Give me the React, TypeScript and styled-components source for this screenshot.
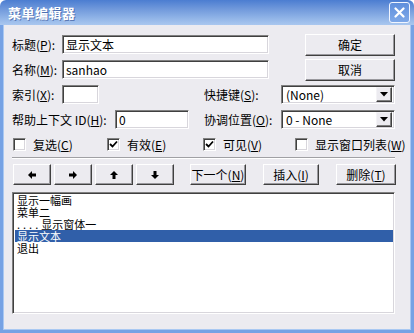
import * as React from 'react';
import styled, { createGlobalStyle } from 'styled-components';

const GlobalStyle = createGlobalStyle`
  html, body {
    margin: 0;
    padding: 0;
    overflow: hidden;
    background: #ffffff;
  }
  body {
    font-family: "Noto Sans CJK SC", "Liberation Sans", sans-serif;
    font-size: 12px;
    color: #000;
  }
`;

const Window = styled.div`
  width: 414px;
  height: 333px;
  display: flex;
  flex-direction: column;
  box-sizing: border-box;
`;

const TitleBar = styled.div`
  height: 25px;
  flex: none;
  display: flex;
  align-items: center;
  justify-content: space-between;
  padding: 0 4px 0 8px;
  background: linear-gradient(#4b7dd1 0%, #6f98db 35%, #93b6e8 75%, #a9c7ef 100%);
  border-radius: 6px 6px 0 0;
`;

const Title = styled.span`
  color: #fff;
  font-weight: bold;
  font-size: 13px;
  letter-spacing: 0.5px;
  text-shadow: 1px 1px 0 rgba(30, 60, 130, 0.5);
`;

const CloseButton = styled.div`
  width: 21px;
  height: 21px;
  box-sizing: border-box;
  border: 1px solid #f0f5ff;
  border-radius: 3px;
  background: linear-gradient(#5f8fdc, #7ea8e8);
  display: flex;
  align-items: center;
  justify-content: center;
`;

const Frame = styled.div`
  flex: 1;
  display: flex;
  min-height: 0;
  border: solid #76a2e4;
  border-width: 0 3px 3px 3px;
  box-shadow: inset 1px 0 0 #a9c8f2, inset -1px 0 0 #a9c8f2, inset 0 -1px 0 #a9c8f2;
`;

const Body = styled.div`
  flex: 1;
  min-width: 0;
  display: flex;
  flex-direction: column;
  background: #ecebf0;
  padding: 7px 15px 0 8px;
  margin: 0 1px 1px 1px;
`;

const Row = styled.div`
  height: 25px;
  display: flex;
  align-items: center;
`;

const LeftCell = styled.div<{ $w: number }>`
  width: ${p => p.$w}px;
  flex: none;
  display: flex;
  align-items: center;
`;

const RightCell = styled.div`
  flex: 1;
  display: flex;
  align-items: center;
  justify-content: space-between;
`;

const Label = styled.span<{ $w?: number }>`
  width: ${p => (p.$w ? `${p.$w}px` : 'auto')};
  flex: none;
  white-space: nowrap;
  line-height: 14px;
`;

const Field = styled.div<{ $w: number }>`
  width: ${p => p.$w}px;
  height: 19px;
  flex: none;
  box-sizing: border-box;
  background: #fff;
  border-top: 1px solid #808080;
  border-left: 1px solid #808080;
  border-bottom: 1px solid #fff;
  border-right: 1px solid #fff;
  box-shadow: inset 1px 1px 0 #404040, inset -1px -1px 0 #d8d6dc;
  padding: 0 3px;
  display: flex;
  align-items: center;
  white-space: nowrap;
  overflow: hidden;
`;

const Combo = styled(Field)`
  justify-content: space-between;
  padding: 0 2px 0 4px;
`;

const DropButton = styled.div`
  width: 16px;
  height: 15px;
  box-sizing: border-box;
  background: #ecebf0;
  border-top: 1px solid #f4f3f6;
  border-left: 1px solid #f4f3f6;
  border-right: 1px solid #404040;
  border-bottom: 1px solid #404040;
  box-shadow: inset -1px -1px 0 #808080;
  display: flex;
  align-items: center;
  justify-content: center;
`;

const Button = styled.div<{ $w: number; $h?: number }>`
  width: ${p => p.$w}px;
  height: ${p => p.$h ?? 22}px;
  flex: none;
  box-sizing: border-box;
  background: #ecebf0;
  border-top: 1px solid #fff;
  border-left: 1px solid #fff;
  border-right: 1px solid #404040;
  border-bottom: 1px solid #404040;
  box-shadow: inset -1px -1px 0 #9a999e;
  display: flex;
  align-items: center;
  justify-content: center;
  white-space: nowrap;
`;

const PushRight = styled(Button)`
  margin-left: auto;
`;

const CheckCell = styled.div<{ $w?: number }>`
  width: ${p => (p.$w ? `${p.$w}px` : 'auto')};
  flex: ${p => (p.$w ? 'none' : '1')};
  display: flex;
  align-items: center;
  gap: 7px;
  padding-left: 1px;
  white-space: nowrap;
`;

const CheckBox = styled.div`
  width: 13px;
  height: 13px;
  flex: none;
  box-sizing: border-box;
  background: #fff;
  border-top: 1px solid #808080;
  border-left: 1px solid #808080;
  border-bottom: 1px solid #fff;
  border-right: 1px solid #fff;
  box-shadow: inset 1px 1px 0 #404040, inset -1px -1px 0 #d8d6dc;
  display: flex;
  align-items: center;
  justify-content: center;
`;

const Separator = styled.div`
  height: 0;
  border-top: 1px solid #a0a0a4;
  border-bottom: 1px solid #fff;
`;

const ButtonRow = styled.div`
  display: flex;
  align-items: center;
  margin-top: 5px;
  padding-left: 1px;
`;

const ArrowGroup = styled.div`
  display: flex;
  gap: 3px;
  margin-right: 16px;
`;

const ActionGroup = styled.div`
  display: flex;
  gap: 17px;
`;

const ListBox = styled.div`
  margin-top: 7px;
  height: 122px;
  box-sizing: border-box;
  background: #fff;
  border-top: 1px solid #808080;
  border-left: 1px solid #808080;
  border-bottom: 1px solid #fff;
  border-right: 1px solid #fff;
  box-shadow: inset 1px 1px 0 #404040, inset -1px -1px 0 #d8d6dc;
  padding: 1px 1px 0 2px;
  display: flex;
  flex-direction: column;
`;

const ListItem = styled.div<{ $selected?: boolean }>`
  height: 12px;
  line-height: 12px;
  font-size: 11px;
  padding-left: 2px;
  white-space: nowrap;
  background: ${p => (p.$selected ? '#305fa9' : 'transparent')};
  color: ${p => (p.$selected ? '#fff' : '#000')};
`;

const Dots = styled.span`
  letter-spacing: 3px;
`;

const Check = () => (
  <svg width="9" height="9" viewBox="0 0 9 9">
    <path d="M1 4 L3.5 6.5 L8 1.5" stroke="#000" strokeWidth="1.8" fill="none" />
  </svg>
);

const DownTri = () => (
  <svg width="8" height="5" viewBox="0 0 8 5">
    <polygon points="0,0 8,0 4,4.5" fill="#000" />
  </svg>
);

const Arrow = ({ dir }: { dir: 'left' | 'right' | 'up' | 'down' }) => {
  const rot = { left: 0, right: 180, up: 90, down: 270 }[dir];
  return (
    <svg width="10" height="10" viewBox="0 0 10 10">
      <g transform={`rotate(${rot} 5 5)`}>
        <polygon points="1,5 5,1 5,3.5 9,3.5 9,6.5 5,6.5 5,9" fill="#000" />
      </g>
    </svg>
  );
};

const CloseX = () => (
  <svg width="11" height="11" viewBox="0 0 11 11">
    <path d="M1.5 1.5 L9.5 9.5 M9.5 1.5 L1.5 9.5" stroke="#fff" strokeWidth="2.2" strokeLinecap="round" />
  </svg>
);

const items = ['显示一幅画', '菜单二', '__dots__', '显示文本', '退出'];

export default function App() {
  return (
    <Window>
      <GlobalStyle />
      <TitleBar>
        <Title>菜单编辑器</Title>
        <CloseButton><CloseX /></CloseButton>
      </TitleBar>
      <Frame>
        <Body>
          <Row>
            <Label $w={50}>标题(<u>P</u>):</Label>
            <Field $w={207}>显示文本</Field>
            <PushRight $w={90}>确定</PushRight>
          </Row>
          <Row>
            <Label $w={50}>名称(<u>M</u>):</Label>
            <Field $w={207}>sanhao</Field>
            <PushRight $w={90}>取消</PushRight>
          </Row>
          <Row>
            <LeftCell $w={192}>
              <Label $w={50}>索引(<u>X</u>):</Label>
              <Field $w={37} />
            </LeftCell>
            <RightCell>
              <Label>快捷键(<u>S</u>):</Label>
              <Combo $w={114}>
                (None)
                <DropButton><DownTri /></DropButton>
              </Combo>
            </RightCell>
          </Row>
          <Row>
            <LeftCell $w={192}>
              <Label $w={103}>帮助上下文 ID(<u>H</u>):</Label>
              <Field $w={74}>0</Field>
            </LeftCell>
            <RightCell>
              <Label>协调位置(<u>O</u>):</Label>
              <Combo $w={114}>
                0 - None
                <DropButton><DownTri /></DropButton>
              </Combo>
            </RightCell>
          </Row>
          <Row>
            <CheckCell $w={93}>
              <CheckBox />
              <span>复选(<u>C</u>)</span>
            </CheckCell>
            <CheckCell $w={95}>
              <CheckBox><Check /></CheckBox>
              <span>有效(<u>E</u>)</span>
            </CheckCell>
            <CheckCell $w={91}>
              <CheckBox><Check /></CheckBox>
              <span>可见(<u>V</u>)</span>
            </CheckCell>
            <CheckCell>
              <CheckBox />
              <span>显示窗口列表(<u>W</u>)</span>
            </CheckCell>
          </Row>
          <Separator />
          <ButtonRow>
            <ArrowGroup>
              <Button $w={38} $h={21}><Arrow dir="left" /></Button>
              <Button $w={38} $h={21}><Arrow dir="right" /></Button>
              <Button $w={38} $h={21}><Arrow dir="up" /></Button>
              <Button $w={38} $h={21}><Arrow dir="down" /></Button>
            </ArrowGroup>
            <ActionGroup>
              <Button $w={56} $h={21}>下一个(<u>N</u>)</Button>
              <Button $w={56} $h={21}>插入(<u>I</u>)</Button>
              <Button $w={60} $h={21}>删除(<u>T</u>)</Button>
            </ActionGroup>
          </ButtonRow>
          <ListBox>
            {items.map((it, i) =>
              it === '__dots__' ? (
                <ListItem key={i}><Dots>....</Dots>显示窗体一</ListItem>
              ) : (
                <ListItem key={i} $selected={it === '显示文本'}>{it}</ListItem>
              )
            )}
          </ListBox>
        </Body>
      </Frame>
    </Window>
  );
}
